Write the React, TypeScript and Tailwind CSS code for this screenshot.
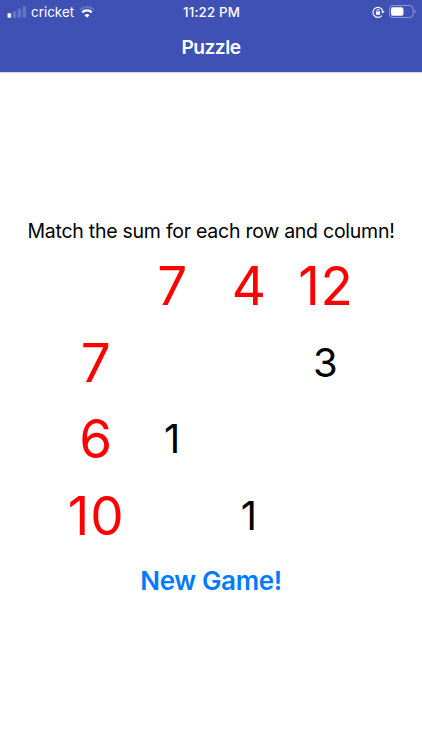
import React from 'react';

type CellKind = 'sum' | 'value' | 'empty';

interface Cell {
  text: string;
  kind: CellKind;
}

const empty: Cell = { text: '', kind: 'empty' };
const sum = (n: number): Cell => ({ text: String(n), kind: 'sum' });
const value = (n: number): Cell => ({ text: String(n), kind: 'value' });

const board: Cell[] = [
  empty, sum(7), sum(4), sum(12),
  sum(7), empty, empty, value(3),
  sum(6), value(1), empty, empty,
  sum(10), empty, value(1), empty,
];

const cellStyles: Record<CellKind, string> = {
  sum: 'pt-[1px] text-[53px] tracking-[0.8px] text-[#ff0000]',
  value: 'pr-[1px] text-[40px] text-black',
  empty: '',
};

const SignalIcon = () => (
  <svg width="20" height="12" viewBox="0 0 20 12" fill="#fff">
    <rect x="0.5" y="7.3" width="3.6" height="4.4" rx="0.8" />
    <g opacity="0.2">
      <rect x="5.6" y="5.4" width="3.6" height="6.3" rx="0.8" />
      <rect x="10.6" y="2.8" width="3.6" height="8.9" rx="0.8" />
      <rect x="15.6" y="0.2" width="3.6" height="11.5" rx="0.8" />
    </g>
  </svg>
);

const WifiIcon = () => (
  <svg width="16" height="12" viewBox="0 0 16 12" fill="none" stroke="#fff">
    <path d="M1 3.9a10 10 0 0 1 14 0" strokeWidth="2" opacity="0.2" />
    <path d="M3.2 6.4a6.8 6.8 0 0 1 9.6 0" strokeWidth="2.3" />
    <path d="M8 11.8L5.5 9.2a3.6 3.6 0 0 1 5 0z" fill="#fff" stroke="none" />
  </svg>
);

const RotationLockIcon = () => (
  <svg width="13" height="12" viewBox="0 0 13 12" fill="none" stroke="#fff">
    <path d="M9.8 9.6A5 5 0 1 1 10.9 5.4" strokeWidth="1.1" />
    <path d="M9.2 5.2h3.4l-1.7 2.3z" fill="#fff" stroke="none" />
    <rect x="3.9" y="5.4" width="4.2" height="3.3" rx="0.5" fill="#fff" stroke="none" />
    <path d="M4.8 5.6V4.5a1.2 1.2 0 0 1 2.4 0v1.1" strokeWidth="0.8" />
  </svg>
);

const BatteryIcon = () => (
  <svg width="27" height="13" viewBox="0 0 27 13" fill="none">
    <rect x="0.5" y="0.5" width="23.6" height="12" rx="3.4" stroke="#fff" strokeOpacity="0.4" />
    <rect x="2" y="2.2" width="12.4" height="8.6" rx="1.8" fill="#fff" />
    <path d="M25.3 4.4v4.2a2.3 2.3 0 0 0 0-4.2z" fill="#fff" fillOpacity="0.4" />
  </svg>
);

const StatusBar = () => (
  <div className="grid h-6 grid-cols-3 items-center pl-[7px] pr-[6px] text-[13.3px]">
    <div className="flex items-center">
      <SignalIcon />
      <span className="ml-[4px] leading-5 tracking-[0.05px]">cricket</span>
      <span className="ml-[5px]">
        <WifiIcon />
      </span>
    </div>
    <span className="text-center leading-5 font-medium tracking-[0.15px]">11:22 PM</span>
    <div className="flex items-center justify-end gap-[4px] pb-[1px]">
      <RotationLockIcon />
      <BatteryIcon />
    </div>
  </div>
);

const App: React.FC = () => {
  return (
    <div className="flex h-[750px] w-[422px] flex-col overflow-hidden bg-white font-['Inter',sans-serif]">
      {/* Header */}
      <header className="h-[72px] shrink-0 bg-[#3f51b5] text-white">
        <StatusBar />
        <h1 className="mt-[9px] text-center text-[19.2px] leading-7 font-semibold tracking-[-0.5px]">Puzzle</h1>
      </header>

      {/* Game */}
      <main className="flex flex-col items-center border-t border-[#d4d6e4] pt-[145px]">
        <p className="text-[19.5px] leading-[26px] tracking-[-0.26px] whitespace-nowrap text-black">
          Match the sum for each row and column!
        </p>
        <div className="mt-[4px] grid grid-cols-[repeat(4,76.6px)] grid-rows-[repeat(4,76.6px)]">
          {board.map((cell, i) => (
            <div key={i} className={`flex items-center justify-center leading-none ${cellStyles[cell.kind]}`}>
              {cell.text}
            </div>
          ))}
        </div>
        <button className="mt-[11px] text-[26px] leading-8 font-semibold tracking-[-0.35px] whitespace-nowrap text-[#007aff]">
          New Game!
        </button>
      </main>
    </div>
  );
};

export default App;
